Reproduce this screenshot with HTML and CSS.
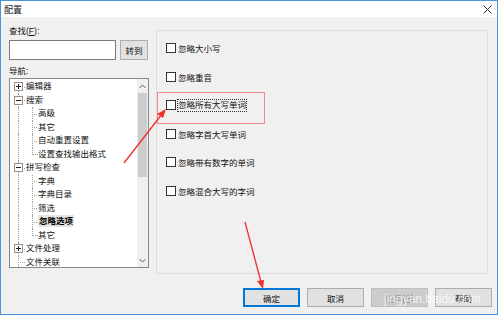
FILE: index.html
```html
<!DOCTYPE html>
<html lang="zh-CN">
<head>
  <meta charset="UTF-8">
  <title>配置</title>
  <link rel="stylesheet" href="styles.css">
</head>
<body>
  <div class="window">
    <div class="titlebar">
      <span class="title">配置</span>
      <svg class="close" width="9" height="9" viewBox="0 0 9 9">
        <path d="M0.5 0.5 L8.5 8.5 M8.5 0.5 L0.5 8.5" stroke="#333" stroke-width="1" fill="none"/>
      </svg>
    </div>

    <div class="content">
      <div class="main">
        <div class="left">
          <div class="lbl">查找(<u>F</u>):</div>
          <div class="findRow">
            <div class="findInput"></div>
            <div class="btn goBtn">转到</div>
          </div>
          <div class="lbl navLbl">导航:</div>
          <div class="tree">
            <div class="nodes">
              <div class="node root first"><span class="pm plus"></span>编辑器</div>
              <div class="node root"><span class="pm minus"></span>搜索</div>
              <div class="node child">高级</div>
              <div class="node child">其它</div>
              <div class="node child">自动重置设置</div>
              <div class="node child last">设置查找输出格式</div>
              <div class="node root"><span class="pm minus"></span>拼写检查</div>
              <div class="node child">字典</div>
              <div class="node child">字典目录</div>
              <div class="node child">筛选</div>
              <div class="node child"><span class="sel">忽略选项</span></div>
              <div class="node child last">其它</div>
              <div class="node root"><span class="pm plus"></span>文件处理</div>
              <div class="node root">文件关联</div>
            </div>
            <div class="vscroll">
              <div class="sArrow">
                <svg width="7" height="5" viewBox="0 0 7 5"><path d="M0.5 4 L3.5 1 L6.5 4" stroke="#606060" fill="none"/></svg>
              </div>
              <div class="thumb"></div>
              <div class="sFill"></div>
              <div class="sArrow">
                <svg width="7" height="5" viewBox="0 0 7 5"><path d="M0.5 1 L3.5 4 L6.5 1" stroke="#606060" fill="none"/></svg>
              </div>
            </div>
          </div>
        </div>

        <div class="group">
          <div class="opt"><span class="box"></span>忽略大小写</div>
          <div class="opt"><span class="box"></span>忽略重音</div>
          <div class="opt"><span class="box"></span><span class="focus">忽略所有大写单词</span></div>
          <div class="opt"><span class="box"></span>忽略字首大写单词</div>
          <div class="opt"><span class="box"></span>忽略带有数字的单词</div>
          <div class="opt"><span class="box"></span>忽略混合大写的字词</div>
          <div class="mark"></div>
        </div>
      </div>

      <div class="buttons">
        <div class="btn okBtn">确定</div>
        <div class="btn">取消</div>
        <div class="btn off">应用(<u>A</u>)</div>
        <div class="btn">帮助</div>
      </div>
    </div>
  </div>

  <!-- 标注箭头 -->
  <svg class="notes" width="500" height="316" viewBox="0 0 500 316">
    <path d="M124 163 L162 114" stroke="#f0302a" stroke-width="1.3" fill="none"/>
    <path d="M166 109 L157 114 L163 118 Z" fill="#f0302a"/>
    <path d="M245 222 L261 282" stroke="#f0302a" stroke-width="1.3" fill="none"/>
    <path d="M263 289 L257 281 L264 280 Z" fill="#f0302a"/>
    <text x="384" y="303" class="wm">jingyan.baidu.com</text>
  </svg>
</body>
</html>
```

FILE: styles.css
```css
* {
  padding: 0;
  margin: 0;
  box-sizing: border-box;
}

body {
  background-color: #fff;
  font-family: "Liberation Sans", "Noto Sans CJK SC", sans-serif;
  font-size: 8.5px;
  color: #111;
  position: relative;
  width: 500px;
  height: 316px;
  overflow: hidden;
}

.window {
  width: 498px;
  height: 315px;
  border: 1px solid #4a96dc;
  background-color: #f0f0f0;
  display: flex;
  flex-direction: column;
}

.titlebar {
  height: 16px;
  background-color: #fff;
  display: flex;
  align-items: center;
  justify-content: space-between;
  padding: 0 5px 0 3px;
}

.title {
  font-size: 9px;
}

.content {
  flex: 1;
  padding: 8px 0 0 8px;
  display: flex;
  flex-direction: column;
}

.main {
  display: flex;
}

.left {
  width: 140px;
  display: flex;
  flex-direction: column;
}

.lbl {
  height: 12px;
  line-height: 12px;
  margin-bottom: 3px;
}

.navLbl {
  margin-top: 5px;
  margin-bottom: 1px;
}

.findRow {
  display: flex;
  height: 20px;
}

.findInput {
  width: 107px;
  height: 20px;
  background-color: #fff;
  border: 1px solid #7a7a7a;
}

.btn {
  background-color: #e1e1e1;
  border: 1px solid #adadad;
  display: flex;
  align-items: center;
  justify-content: center;
  height: 19px;
  width: 57px;
}

.goBtn {
  width: 28px;
  height: 20px;
  margin-left: 4px;
}

/* 导航树 */
.tree {
  height: 190px;
  background-color: #fff;
  border: 1px solid #828790;
  display: flex;
  overflow: hidden;
}

.nodes {
  flex: 1;
  padding-top: 1px;
}

.node {
  position: relative;
  height: 13.5px;
  line-height: 13.5px;
  padding-left: 16px;
  white-space: nowrap;
}

.node::before {
  content: "";
  position: absolute;
  left: 8px;
  top: 0;
  bottom: 0;
  border-left: 1px dotted #a0a0a0;
}

.node.first::before {
  top: 50%;
}

.node.root::after {
  content: "";
  position: absolute;
  left: 8px;
  width: 7px;
  top: 50%;
  border-top: 1px dotted #a0a0a0;
}

.node.child {
  padding-left: 28px;
  background-image: linear-gradient(#fff, #fff);
}

.node.child::after {
  content: "";
  position: absolute;
  left: 22px;
  top: 0;
  height: 50%;
  width: 5px;
  border-left: 1px dotted #a0a0a0;
  border-bottom: 1px dotted #a0a0a0;
}

.node.child:not(.last) {
  box-shadow: none;
}

.node.child:not(.last)::after {
  height: 100%;
  border-bottom: none;
  background-image: linear-gradient(to right, #a0a0a0 50%, transparent 50%);
  background-size: 2px 1px;
  background-repeat: repeat-x;
  background-position: 1px 6.5px;
}

.pm {
  position: absolute;
  left: 4px;
  top: 2px;
  width: 9px;
  height: 9px;
  border: 1px solid #919191;
  background-color: #fff;
  z-index: 1;
}

.pm::before {
  content: "";
  position: absolute;
  left: 1px;
  top: 3px;
  width: 5px;
  height: 1px;
  background-color: #222;
}

.pm.plus::after {
  content: "";
  position: absolute;
  left: 3px;
  top: 1px;
  width: 1px;
  height: 5px;
  background-color: #222;
}

.sel {
  background-color: #e5e5e5;
  padding: 1px 1px;
  color: #000;
  font-weight: bold;
}

.vscroll {
  width: 11px;
  background-color: #f0f0f0;
  display: flex;
  flex-direction: column;
}

.sArrow {
  height: 14px;
  display: flex;
  align-items: center;
  justify-content: center;
}

.thumb {
  height: 84px;
  margin: 0 1px;
  background-color: #cdcdcd;
}

.sFill {
  flex: 1;
}

/* 右侧选项 */
.group {
  position: relative;
  width: 332px;
  height: 244px;
  margin: 5px 0 0 7px;
  border: 1px solid #dcdcdc;
  padding: 10px 0 0 9px;
  display: flex;
  flex-direction: column;
  gap: 14.5px;
}

.opt {
  height: 14px;
  display: flex;
  align-items: center;
}

.box {
  width: 10px;
  height: 10px;
  border: 1px solid #333;
  background-color: #fff;
  margin-right: 2px;
}

.focus {
  outline: 1px dotted #333;
  line-height: 11px;
}

.mark {
  position: absolute;
  left: 0;
  top: 61px;
  width: 108px;
  height: 32px;
  border: 1px solid #f08a8a;
}

.buttons {
  margin-top: 14px;
  display: flex;
  justify-content: flex-end;
  gap: 7px;
  padding-right: 5px;
}

.okBtn {
  border: 2px solid #0078d7;
}

.off {
  color: #838383;
  border-color: #bfbfbf;
  background-color: #cccccc;
}

.notes {
  position: absolute;
  left: 0;
  top: 0;
  pointer-events: none;
}

.wm {
  font-family: "Liberation Sans", sans-serif;
  font-size: 12px;
  fill: #ffffff;
  fill-opacity: 0.75;
}
```
